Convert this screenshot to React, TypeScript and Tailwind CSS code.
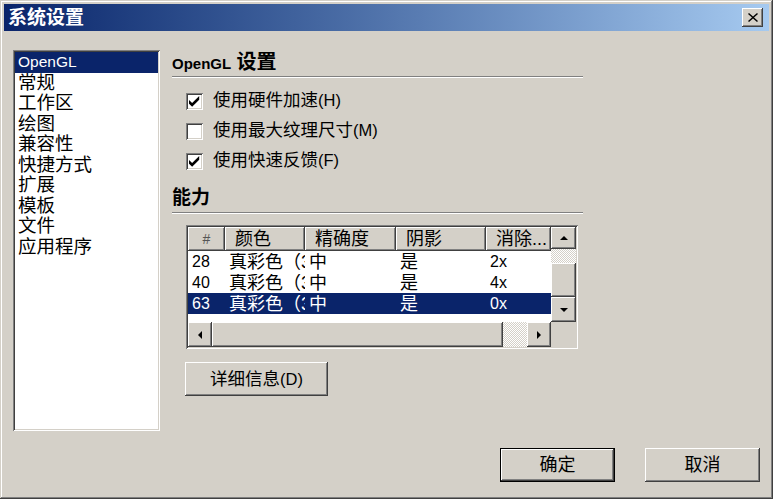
import React from "react";

const raised =
  "shadow-[inset_-1px_-1px_#404040,inset_1px_1px_#ffffff,inset_-2px_-2px_#808080,inset_2px_2px_#d4d0c8]";
const sunken =
  "shadow-[inset_1px_1px_#808080,inset_-1px_-1px_#ffffff,inset_2px_2px_#404040,inset_-2px_-2px_#d4d0c8]";
const hatch =
  "bg-[image:repeating-conic-gradient(#ffffff_0_25%,#d4d0c8_0_50%)] bg-[length:2px_2px]";

const navItems = ["常规", "工作区", "绘图", "兼容性", "快捷方式", "扩展", "模板", "文件", "应用程序"];

const columns = [
  { label: "#", width: 37, center: true },
  { label: "颜色", width: 80 },
  { label: "精确度", width: 91 },
  { label: "阴影", width: 90 },
  { label: "消除...", width: 65 },
];

const rows = [
  { id: "28", color: "真彩色（32位）", level: "中", shadow: "是", aa: "2x" },
  { id: "40", color: "真彩色（32位）", level: "中", shadow: "是", aa: "4x" },
  { id: "63", color: "真彩色（32位）", level: "中", shadow: "是", aa: "0x", selected: true },
];

function Arrow({ dir }: { dir: "up" | "down" | "left" | "right" }) {
  const pts = {
    up: "0,4 4,0 8,4",
    down: "0,0 8,0 4,4",
    left: "4,0 4,8 0,4",
    right: "0,0 4,4 0,8",
  }[dir];
  const vertical = dir === "up" || dir === "down";
  return (
    <svg width={vertical ? 8 : 4} height={vertical ? 4 : 8} viewBox={vertical ? "0 0 8 4" : "0 0 4 8"}>
      <polygon points={pts} fill="#000" />
    </svg>
  );
}

function Check() {
  return (
    <svg width="11" height="11" viewBox="0 0 7 7">
      <path d="M0 2.5 L2 4.5 L6.5 0 L6.5 2.4 L2 6.9 L0 4.9Z" fill="#000" />
    </svg>
  );
}

function Section({ title }: { title: React.ReactNode }) {
  return (
    <div>
      <div className="h-[24px] leading-[24px] text-[19px] font-bold whitespace-nowrap">{title}</div>
      <div className="mt-[2px] h-0 border-t border-b border-t-[#808080] border-b-white" />
    </div>
  );
}

function CheckRow({ checked, label, key2 }: { checked: boolean; label: string; key2: string }) {
  return (
    <div className="h-[30px] flex items-center pl-[14px] gap-[10px]">
      <div className={`w-[17px] h-[17px] bg-white flex items-center justify-center ${sunken}`}>
        {checked && <Check />}
      </div>
      <span className="text-[17.5px] leading-none whitespace-nowrap">
        {label}
        <span className="text-[16.5px]">({key2})</span>
      </span>
    </div>
  );
}

export default function App() {
  return (
    <div
      className={`w-[773px] h-[499px] bg-[#d4d0c8] p-[4px] flex flex-col text-black font-['Liberation_Sans','Noto_Sans_CJK_SC',sans-serif] shadow-[inset_-1px_-1px_#404040,inset_1px_1px_#d4d0c8,inset_-2px_-2px_#808080,inset_2px_2px_#ffffff]`}
    >
      {/* title bar */}
      <div className="h-[27px] flex items-center justify-between bg-linear-to-r from-[#0a246a] to-[#a6caf0]">
        <span className="pl-[4px] text-[19px] font-bold text-white leading-none">系统设置</span>
        <div className={`mr-[6px] w-[21px] h-[19px] bg-[#d4d0c8] flex items-center justify-center ${raised}`}>
          <svg width="10" height="9" viewBox="0 0 10 9">
            <path d="M1 0 L5 3.5 L9 0 L10 1 L6 4.5 L10 8 L9 9 L5 5.5 L1 9 L0 8 L4 4.5 L0 1Z" fill="#000" />
          </svg>
        </div>
      </div>

      <div className="flex mt-[19px]">
        {/* nav list */}
        <div className={`ml-[9px] w-[147px] h-[381px] bg-white p-[2px] ${sunken}`}>
          <div className="h-[20.5px] leading-[20.5px] pl-[3px] bg-[#0a246a] text-white text-[15.5px]">OpenGL</div>
          {navItems.map((item) => (
            <div key={item} className="h-[20.5px] leading-[20.5px] pl-[3px] text-[18.5px] whitespace-nowrap">
              {item}
            </div>
          ))}
        </div>

        <div className="ml-[12px] w-[411px] flex flex-col">
          <Section
            title={
              <>
                <span className="text-[15px]">OpenGL</span> <span className="text-[20px]">设置</span>
              </>
            }
          />
          <div className="mt-[8px]">
            <CheckRow checked label="使用硬件加速" key2="H" />
            <CheckRow checked={false} label="使用最大纹理尺寸" key2="M" />
            <CheckRow checked label="使用快速反馈" key2="F" />
          </div>
          <div className="mt-[10px]">
            <Section title="能力" />
          </div>

          {/* capability table */}
          <div className={`mt-[11px] ml-[14px] w-[392px] h-[124px] p-[2px] bg-[#d4d0c8] ${sunken}`}>
            <div className="flex h-[95px]">
              <div className="w-[363px] bg-white overflow-hidden">
                <div className="flex h-[24px]">
                  {columns.map((c) => (
                    <div
                      key={c.label}
                      style={{ width: c.width }}
                      className={`shrink-0 h-full bg-[#d4d0c8] flex items-center text-[18px] whitespace-nowrap overflow-hidden ${
                        c.center ? "justify-center" : "pl-[10px]"
                      } ${raised}`}
                    >
                      {c.center ? <span className="text-[14px] text-[#555]">#</span> : c.label}
                    </div>
                  ))}
                </div>
                {rows.map((r) => (
                  <div
                    key={r.id}
                    className={`flex h-[21px] items-center text-[18px] leading-none ${
                      r.selected ? "bg-[#0a246a] text-white" : ""
                    }`}
                  >
                    {[r.id, r.color, r.level, r.shadow, r.aa].map((v, i) => (
                      <div
                        key={i}
                        style={{ width: columns[i].width }}
                        className={`shrink-0 pl-[4px] overflow-hidden whitespace-nowrap ${
                          i === 0 || i === 4 ? "text-[16px]" : ""
                        }`}
                      >
                        {v}
                      </div>
                    ))}
                  </div>
                ))}
              </div>
              <div className="w-[25px] flex flex-col">
                <div className={`h-[22px] bg-[#d4d0c8] flex items-center justify-center ${raised}`}>
                  <Arrow dir="up" />
                </div>
                <div className={`h-[14px] ${hatch}`} />
                <div className={`h-[34px] bg-[#d4d0c8] ${raised}`} />
                <div className={`h-[25px] bg-[#d4d0c8] flex items-center justify-center ${raised}`}>
                  <Arrow dir="down" />
                </div>
              </div>
            </div>
            <div className="flex h-[25px]">
              <div className={`w-[24px] bg-[#d4d0c8] flex items-center justify-center ${raised}`}>
                <Arrow dir="left" />
              </div>
              <div className={`w-[291px] bg-[#d4d0c8] ${raised}`} />
              <div className={`w-[24px] ${hatch}`} />
              <div className={`w-[24px] bg-[#d4d0c8] flex items-center justify-center ${raised}`}>
                <Arrow dir="right" />
              </div>
            </div>
          </div>

          <button
            className={`mt-[13px] ml-[13px] w-[143px] h-[34px] bg-[#d4d0c8] text-[17.5px] ${raised}`}
          >
            详细信息<span className="text-[16.5px]">(D)</span>
          </button>
        </div>
      </div>

      <div className="flex justify-end gap-[30px] mt-[17px] pr-[9px]">
        <button className="w-[115px] h-[34px] border border-black bg-[#d4d0c8] p-0">
          <div className={`w-full h-full flex items-center justify-center text-[18px] ${raised}`}>确定</div>
        </button>
        <button className={`w-[115px] h-[34px] bg-[#d4d0c8] text-[18px] ${raised}`}>取消</button>
      </div>
    </div>
  );
}
